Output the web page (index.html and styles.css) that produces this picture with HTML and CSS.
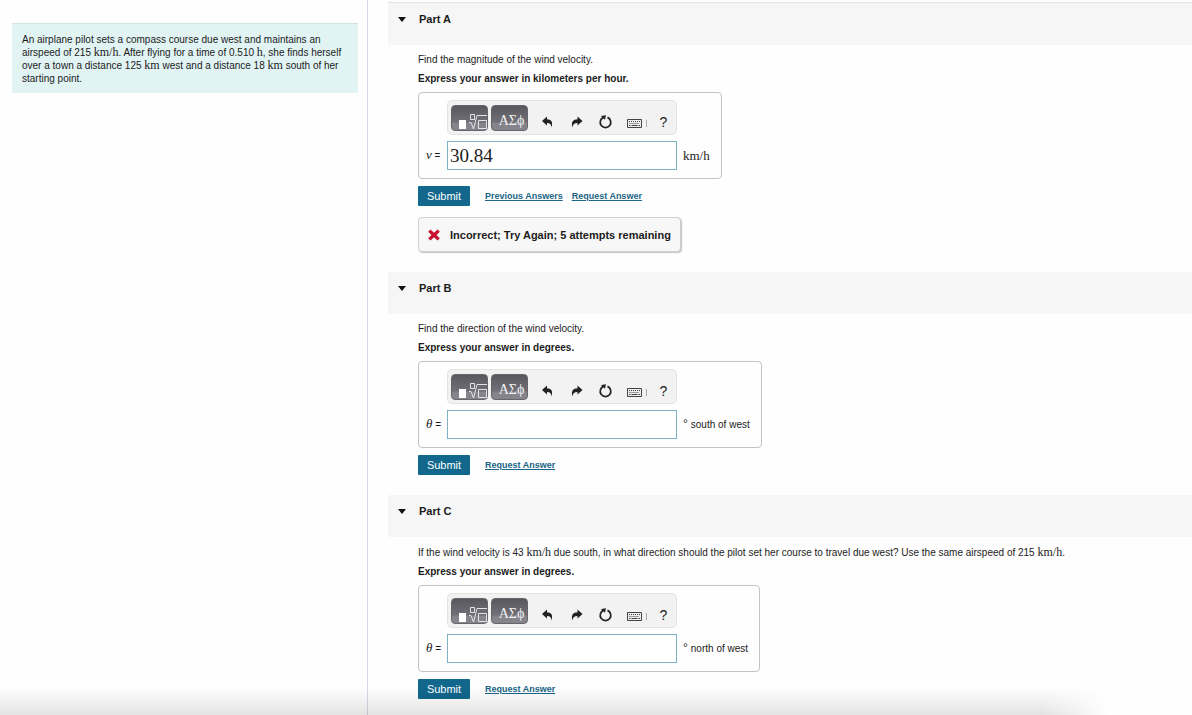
FILE: index.html
```html
<!DOCTYPE html>
<html lang="en">
<head>
<meta charset="utf-8">
<title>Wind velocity</title>
<link rel="stylesheet" href="styles.css">
</head>
<body>
<svg class="sprite" aria-hidden="true">
  <symbol id="i-root" viewBox="0 0 37 26">
    <path d="M8 15h7v9H8z" fill="#fff"/>
    <path d="M19.500 9.500h4v5h-4zM18 17.500h2l2.500 6.500 3.500-13.500h10M27.500 15.500h8v8h-8z" fill="none" stroke="#e4e4e6"/>
  </symbol>
  <symbol id="i-undo" viewBox="0 0 29 16">
    <path d="M9 7l5-4.500v2.700c4.300.2 6.200 2.700 4.500 8.300-.2-3.200-1.500-4.500-4.500-4.500v2.500z" fill="#222"/>
  </symbol>
  <symbol id="i-redo" viewBox="0 0 29 16">
    <path d="M20.500 7l-5-4.500v2.700c-4.300.2-6.700 2.700-5 8.300.2-3.200 2-4.500 5-4.500v2.500z" fill="#222"/>
  </symbol>
  <symbol id="i-reset" viewBox="0 0 29 16">
    <path d="M16.500 3.400a5.300 5.300 0 1 1-4 0" fill="none" stroke="#222" stroke-width="1.700"/>
    <path d="M10 2l5-.7-1 4.500z" fill="#222"/>
  </symbol>
  <symbol id="i-keys" viewBox="0 0 29 16">
    <path d="M7.500 5.500h14v8h-14z" fill="#eee" stroke="#444"/>
    <path d="M9 7.500h11M9.500 9.500h10" stroke="#444" stroke-dasharray="1 1"/>
    <path d="M9 11.500h1.500m1 0h6m1 0H20" stroke="#444"/>
    <path d="M26.500 6v7" stroke="#aaa"/>
  </symbol>
</svg>
<div class="page">
  <aside class="sidebar">
    <p class="problem">An airplane pilot sets a compass course due west and maintains an airspeed of 215 <span class="math">km/h</span>. After flying for a time of 0.510 <span class="math">h</span>, she finds herself over a town a distance 125 <span class="math">km</span> west and a distance 18 <span class="math">km</span> south of her starting point.</p>
  </aside>
  <main class="parts">
    <section class="part">
      <h2 class="part-head"><button class="toggle" type="button" aria-expanded="true"><span class="caret"></span>Part A</button></h2>
      <form class="part-body">
        <p class="question">Find the magnitude of the wind velocity.</p>
        <p class="hint">Express your answer in kilometers per hour.</p>
        <div class="answer">
          <div class="toolbar">
            <button class="palette" type="button" aria-label="Templates"><svg class="root"><use href="#i-root"/></svg></button>
            <button class="palette greek" type="button">ΑΣϕ</button>
            <div class="tools">
              <button class="tool" type="button" aria-label="Undo"><svg class="icon"><use href="#i-undo"/></svg></button>
              <button class="tool" type="button" aria-label="Redo"><svg class="icon"><use href="#i-redo"/></svg></button>
              <button class="tool" type="button" aria-label="Reset"><svg class="icon"><use href="#i-reset"/></svg></button>
              <button class="tool" type="button" aria-label="Keyboard shortcuts"><svg class="icon"><use href="#i-keys"/></svg></button>
              <button class="tool help" type="button">?</button>
            </div>
          </div>
          <label class="symbol" for="speed"><i>v</i> =</label>
          <input class="value" id="speed" type="text" value="30.84">
          <span class="unit math">km/h</span>
        </div>
        <div class="actions">
          <button class="submit" type="button">Submit</button>
          <a class="link" href="#previous">Previous Answers</a>
          <a class="link" href="#request-a">Request Answer</a>
        </div>
        <div class="feedback"><svg class="cross" viewBox="0 0 12 12"><path d="M2.500 .5L6 3.700 9.500 .5l2.300 2.300L8.500 6l3.300 3.300-2.300 2.300L6 8.300 2.500 11.600.2 9.300 3.500 6 .2 2.800z" fill="#c8102e"/></svg>Incorrect; Try Again; 5 attempts remaining</div>
      </form>
    </section>
    <section class="part">
      <h2 class="part-head"><button class="toggle" type="button" aria-expanded="true"><span class="caret"></span>Part B</button></h2>
      <form class="part-body">
        <p class="question">Find the direction of the wind velocity.</p>
        <p class="hint">Express your answer in degrees.</p>
        <div class="answer">
          <div class="toolbar">
            <button class="palette" type="button" aria-label="Templates"><svg class="root"><use href="#i-root"/></svg></button>
            <button class="palette greek" type="button">ΑΣϕ</button>
            <div class="tools">
              <button class="tool" type="button" aria-label="Undo"><svg class="icon"><use href="#i-undo"/></svg></button>
              <button class="tool" type="button" aria-label="Redo"><svg class="icon"><use href="#i-redo"/></svg></button>
              <button class="tool" type="button" aria-label="Reset"><svg class="icon"><use href="#i-reset"/></svg></button>
              <button class="tool" type="button" aria-label="Keyboard shortcuts"><svg class="icon"><use href="#i-keys"/></svg></button>
              <button class="tool help" type="button">?</button>
            </div>
          </div>
          <label class="symbol" for="south"><i>θ</i> =</label>
          <input class="value" id="south" type="text">
          <span class="unit"><span class="degree">°</span>south of west</span>
        </div>
        <div class="actions">
          <button class="submit" type="button">Submit</button>
          <a class="link" href="#request-b">Request Answer</a>
        </div>
      </form>
    </section>
    <section class="part">
      <h2 class="part-head"><button class="toggle" type="button" aria-expanded="true"><span class="caret"></span>Part C</button></h2>
      <form class="part-body">
        <p class="question with-math">If the wind velocity is 43 <span class="math">km/h</span> due south, in what direction should the pilot set her course to travel due west? Use the same airspeed of 215 <span class="math">km/h</span>.</p>
        <p class="hint">Express your answer in degrees.</p>
        <div class="answer">
          <div class="toolbar">
            <button class="palette" type="button" aria-label="Templates"><svg class="root"><use href="#i-root"/></svg></button>
            <button class="palette greek" type="button">ΑΣϕ</button>
            <div class="tools">
              <button class="tool" type="button" aria-label="Undo"><svg class="icon"><use href="#i-undo"/></svg></button>
              <button class="tool" type="button" aria-label="Redo"><svg class="icon"><use href="#i-redo"/></svg></button>
              <button class="tool" type="button" aria-label="Reset"><svg class="icon"><use href="#i-reset"/></svg></button>
              <button class="tool" type="button" aria-label="Keyboard shortcuts"><svg class="icon"><use href="#i-keys"/></svg></button>
              <button class="tool help" type="button">?</button>
            </div>
          </div>
          <label class="symbol" for="north"><i>θ</i> =</label>
          <input class="value" id="north" type="text">
          <span class="unit"><span class="degree">°</span>north of west</span>
        </div>
        <div class="actions">
          <button class="submit" type="button">Submit</button>
          <a class="link" href="#request-c">Request Answer</a>
        </div>
      </form>
    </section>
  </main>
</div>
<div class="shade"></div>
</body>
</html>
```
FILE: styles.css
```css
* { box-sizing: border-box; }

body {
  margin: 0;
  background: #fefefe;
  color: #1c1c1c;
  font: 10px/14px "Liberation Sans", Arial, sans-serif;
}

p, h2 { margin: 0; }

button, input { font: inherit; color: inherit; }

button { border: 0; padding: 0; background: none; cursor: pointer; }

.sprite { display: none; }

.page { display: flex; min-height: 100vh; }

.sidebar {
  flex: 0 0 368px;
  padding: 23px 9px 0 12px;
  border-right: 1px solid #d5dae6;
}

.problem {
  padding: 9px 9px 8px 10px;
  border-top: 1px solid #d3e3e3;
  background: #e1f3f3;
  line-height: 13px;
}

.math { font-family: "Liberation Serif", serif; font-size: 12px; line-height: 12px; }

.parts { flex: 1; min-width: 0; padding: 2px 0 0 20px; }

.part:first-child { border-top: 1px solid #e2e2e2; }

.part-head {
  height: 42px;
  padding: 9px 10px 0;
  background: #f6f6f6;
  font-size: 11px;
  line-height: 14px;
}

.toggle { display: flex; align-items: center; gap: 13px; }

.caret {
  border: 4px solid transparent;
  border-top: 5px solid #111;
  border-bottom: 0;
}

.part-body { padding: 8px 0 20px 30px; }

.question { margin-bottom: 5px; }

.with-math { line-height: 15px; }

.hint { margin-bottom: 6px; font-weight: bold; }

.answer {
  display: grid;
  grid-template-columns: 21px 230px auto;
  row-gap: 6px;
  align-items: center;
  width: fit-content;
  padding: 7px 11px 8px 7px;
  border: 1px solid #c4c4c4;
  border-radius: 4px;
}

.toolbar {
  grid-column: 2;
  display: flex;
  gap: 3px;
  height: 35px;
  padding: 4px 0 4px 3px;
  border: 1px solid #e3e3e3;
  border-radius: 5px;
  background: #f2f2f2;
}

.palette {
  flex: none;
  width: 37px;
  height: 26px;
  border: 1px solid #66656c;
  border-radius: 4px;
  background: linear-gradient(#59585e, #717078 68%, #85848d 70%, #85848d);
  color: #f4f4f4;
}

.root { display: block; width: 37px; height: 26px; margin: -1px; }

.greek {
  padding: 6px 0 0 4px;
  font-family: "Liberation Serif", serif;
  font-size: 14px;
  line-height: 16px;
}

.tools { flex: 1; display: flex; padding: 9px 0 0 2px; }

.tool { flex: none; width: 29px; height: 16px; }

.icon { display: block; width: 29px; height: 16px; }

.help { width: 27px; padding-left: 2px; font-size: 14px; line-height: 16px; }

.symbol { grid-column: 1; }

.symbol i { font-family: "Liberation Serif", serif; font-size: 13px; line-height: 14px; }

.value {
  width: 100%;
  height: 29px;
  padding: 0 2px;
  border: 1px solid #7fb0c4;
  background: #fff;
  font-family: "Liberation Serif", serif;
  font-size: 19px;
}

.unit { padding-left: 6px; }

.unit.math { font-size: 13px; }

.degree { padding-right: 3px; font-size: 12px; line-height: 12px; }

.actions { display: flex; align-items: center; gap: 9px; margin-top: 7px; }

.submit {
  width: 52px;
  height: 20px;
  margin-right: 6px;
  border-radius: 1px;
  background: #12688c;
  color: #fff;
  font-size: 11px;
}

.link { color: #1b6587; font-size: 9px; font-weight: bold; }

.feedback {
  display: flex;
  align-items: center;
  gap: 10px;
  width: fit-content;
  height: 35px;
  margin-top: 11px;
  padding: 0 9px;
  border: 1px solid #cfcfcf;
  border-radius: 4px;
  box-shadow: 1px 1px 1px #c4c4c4;
  background: #f7f7f7;
  font-size: 11px;
  font-weight: bold;
}

.cross { width: 12px; height: 12px; }

/* Soft shade along the lower edge of the window */
.shade {
  position: fixed;
  left: 0;
  right: 7%;
  bottom: 0;
  height: 28px;
  background: linear-gradient(transparent, rgba(0, 0, 0, .1));
  mask-image: linear-gradient(to right, #000 94%, transparent);
  pointer-events: none;
}
```
